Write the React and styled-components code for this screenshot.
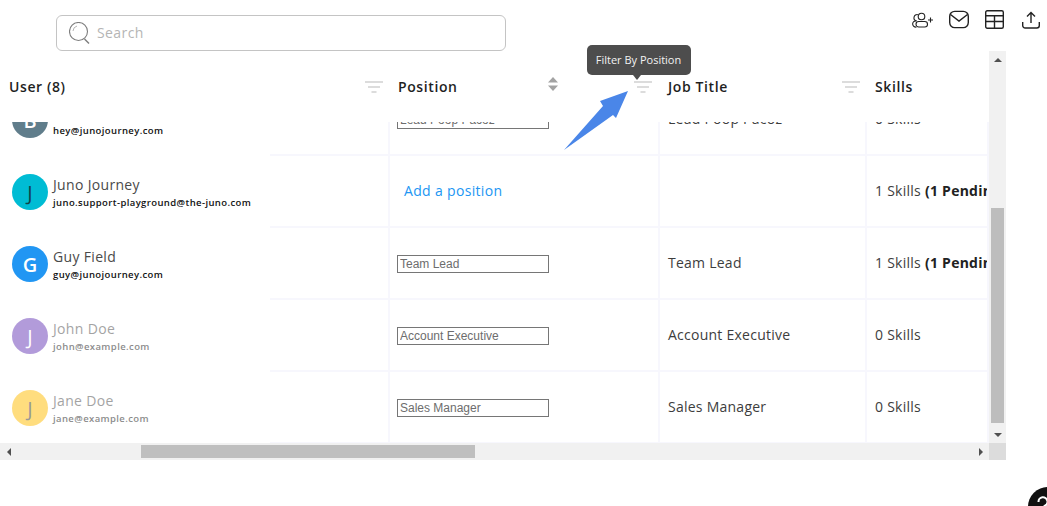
import React from 'react'
import styled, { createGlobalStyle } from 'styled-components'

const GlobalStyle = createGlobalStyle`
  html, body {
    margin: 0;
    height: 100%;
    overflow: hidden;
    background: #fff;
    font-family: "Open Sans", "Liberation Sans", sans-serif;
  }
  * { box-sizing: border-box; }
`

const Page = styled.div`
  position: relative;
  width: 1047px;
  height: 506px;
  overflow: hidden;
`
const TopBar = styled.div`
  display: flex;
  justify-content: space-between;
  height: 51px;
  padding: 10px 7px 0 56px;
`
const SearchBox = styled.label`
  display: flex;
  align-items: center;
  width: 450px;
  height: 36px;
  margin-top: 5px;
  padding-left: 12px;
  border: 1px solid #c4c4c4;
  border-radius: 6px;
`
const SearchInput = styled.input`
  flex: 1;
  min-width: 0;
  margin-left: 5px;
  margin-bottom: 1px;
  border: none;
  outline: none;
  font: 14px "Open Sans", sans-serif;
  letter-spacing: 0.4px;
  &::placeholder { color: #b5b5b5; opacity: 1; }
`
const Actions = styled.div`
  display: flex;
  align-items: flex-start;
  gap: 16px;
`
const TableFrame = styled.div`
  display: grid;
  grid-template-columns: 989px 17px;
  grid-template-rows: 392px 17px;
  width: 1006px;
`
const TableArea = styled.div`
  display: flex;
  flex-direction: column;
  min-width: 0;
  overflow: hidden;
`
const HeaderRow = styled.div`
  display: grid;
  grid-template-columns: 390px 270px 207px 1fr;
  flex: none;
  height: 71px;
`
const HeaderCell = styled.div`
  display: flex;
  align-items: center;
  justify-content: space-between;
  padding: 0 7px 0 ${p => p.$inset}px;
  font-size: 14px;
  font-weight: 600;
  letter-spacing: 0.6px;
  color: #1f1f1f;
`
const HeaderTools = styled.div`
  display: flex;
  align-items: center;
  gap: 76px;
  margin-right: 1px;
`
const SortMark = styled.svg`
  margin-bottom: 6px;
`
const Rows = styled.div`
  display: flex;
  flex: 1;
  flex-direction: column;
  justify-content: flex-end;
  min-height: 0;
  margin-bottom: -1px;
`
const RowsClip = styled.div`
  display: flex;
  flex: 1;
  flex-direction: column;
  min-height: 0;
  overflow: hidden;
`
const Row = styled.div`
  display: grid;
  grid-template-columns: 270px 120px 270px 207px 1fr;
  flex: none;
  height: 72px;
`
const UserCell = styled.div`
  display: flex;
  align-items: flex-start;
  gap: 5px;
  padding: 18px 0 0 12px;
  opacity: ${p => (p.$muted ? 0.5 : 1)};
`
const Avatar = styled.div`
  display: flex;
  align-items: center;
  justify-content: center;
  flex: none;
  width: 36px;
  height: 36px;
  border-radius: 50%;
  background: ${p => p.$color};
  color: ${p => p.$ink};
  font-size: 20px;
  font-weight: ${p => p.$weight};
`
const UserText = styled.div`
  display: flex;
  flex-direction: column;
`
const UserName = styled.div`
  font-size: 14px;
  line-height: 21px;
  letter-spacing: 0.33px;
  color: #4a4a4a;
`
const UserMail = styled.div`
  margin-top: 1px;
  font-size: 9.5px;
  line-height: 13px;
  font-weight: 600;
  letter-spacing: 0.39px;
  color: #111;
`
const Cell = styled.div`
  display: flex;
  align-items: center;
  min-width: 0;
  padding-left: ${p => p.$inset}px;
  padding-bottom: ${p => (p.$lift ? 2 : 0)}px;
  border-right: 2px solid #f7f7fd;
  border-bottom: 2px solid #f7f7fd;
  font-size: 14px;
  letter-spacing: 0.25px;
  color: #3d3d3d;
  white-space: nowrap;
  overflow: hidden;
`
const PositionInput = styled.input`
  width: 152px;
  height: 18px;
  margin: 2px 0 0;
  padding: 1px 2px;
  border: 1px solid #767676;
  border-radius: 0;
  outline: none;
  background: #fff;
  font: 12px "Liberation Sans", Arial, sans-serif;
  color: #6d6d6d;
`
const AddLink = styled.a`
  margin-bottom: 2px;
  padding-left: 7px;
  color: #2196f3;
  letter-spacing: 0.33px;
`
const Pending = styled.b`
  font-weight: 700;
  color: #222;
  margin-left: 4px;
`
const VScroll = styled.div`
  display: flex;
  flex-direction: column;
  align-items: center;
  background: #f1f1f1;
`
const VThumb = styled.div`
  width: 13px;
  height: 215px;
  margin-top: 140px;
  margin-bottom: 3px;
  background: #bdbdbd;
`
const HScroll = styled.div`
  display: flex;
  align-items: center;
  background: #f1f1f1;
`
const HThumb = styled.div`
  width: 334px;
  height: 13px;
  margin-left: 124px;
  margin-right: auto;
  background: #bfbfbf;
`
const ScrollCorner = styled.div`
  background: #dcdcdc;
`
const ArrowButton = styled.div`
  display: flex;
  align-items: center;
  justify-content: center;
  flex: none;
  width: 17px;
  height: 17px;
`
const Tooltip = styled.div`
  position: absolute;
  top: 45px;
  left: 587px;
  display: flex;
  align-items: center;
  justify-content: center;
  width: 104px;
  height: 30px;
  padding: 0 1px 1px 0;
  border-radius: 5px;
  background: #4d4d4d;
  color: #f2f2f2;
  font-size: 11px;
  font-weight: 500;
  &::after {
    content: '';
    position: absolute;
    top: 100%;
    left: 46px;
    border: 4px solid transparent;
    border-top: 5px solid #4d4d4d;
  }
`
const Pointer = styled.svg`
  position: absolute;
  top: 88px;
  left: 560px;
`
const HelpBadge = styled.div`
  position: absolute;
  left: 1028px;
  top: 487px;
  width: 40px;
  height: 40px;
  padding: 9px;
  border-radius: 50%;
  background: #111;
`

const FilterIcon = () => (
  <svg width="18" height="12" viewBox="0 0 18 12" fill="#dcdcdc">
    <rect x="0" y="0" width="18" height="2" />
    <rect x="3" y="5" width="12" height="2" />
    <rect x="6.5" y="10" width="5" height="2" />
  </svg>
)

const SortIcon = () => (
  <SortMark width="10" height="14" viewBox="0 0 10 14" fill="#a3a3a3">
    <path d="M5 0 L10 5.5 H0 Z" />
    <path d="M0 8.5 H10 L5 14 Z" />
  </SortMark>
)

const Tri = ({ dir }) => {
  const paths = {
    up: 'M4 2 L8 6 H0 Z',
    down: 'M0 2 H8 L4 6 Z',
    left: 'M6 0 V8 L2 4 Z',
    right: 'M2 0 V8 L6 4 Z',
  }
  return (
    <svg width="8" height="8" viewBox="0 0 8 8" fill="#505050">
      <path d={paths[dir]} />
    </svg>
  )
}

const SearchIcon = () => (
  <svg width="21" height="22" viewBox="0 0 21 22" fill="none" stroke="#7d7d7d">
    <circle cx="9.5" cy="9.5" r="9" strokeWidth="1.1" />
    <path d="M4 9 A5.5 5.5 0 0 1 8 4" stroke="#b5b5b5" />
    <path d="M15.5 17 L20 21.5" strokeWidth="1.4" />
  </svg>
)

const AddUsersIcon = () => (
  <svg width="21" height="19" viewBox="0 0 21 19" fill="none" stroke="#222" strokeWidth="1.1">
    <circle cx="9.5" cy="6.5" r="3.3" />
    <path d="M5.8 4.6 A3 3 0 0 0 4.5 10.8" />
    <rect x="4" y="11.5" width="11.5" height="5.5" rx="2.75" />
    <path d="M4.5 11 A3 3 0 0 0 0.7 14.3 A3 3 0 0 0 4.5 17" />
    <path d="M16 10 H21 M18.5 7.5 V12.5" />
  </svg>
)

const MailIcon = () => (
  <svg width="20" height="19" viewBox="0 0 20 19" fill="none" stroke="#222" strokeWidth="1.4">
    <rect x="0.7" y="1.4" width="18.6" height="16.2" rx="5" />
    <path d="M1.5 4.5 L10 11 L18.5 4.5" />
  </svg>
)

const TableIcon = () => (
  <svg width="19" height="19" viewBox="0 0 19 19" fill="none" stroke="#222" strokeWidth="1.4">
    <rect x="0.7" y="0.7" width="17.6" height="17.6" rx="1.5" />
    <path d="M0.7 5.8 H18.3 M0.7 11.5 H18.3 M9.5 5.8 V18.3" />
  </svg>
)

const UploadIcon = () => (
  <svg width="20" height="19" viewBox="-2 0 20 19" fill="none" stroke="#222" strokeWidth="1.4">
    <path d="M9 13 V2.5 M5 6.5 L9 2.5 L13 6.5" />
    <path d="M0.7 12 V15.5 A2.5 2.5 0 0 0 3.2 18 H14.8 A2.5 2.5 0 0 0 17.3 15.5 V12" />
  </svg>
)

const users = [
  { name: 'Ben Poole', mail: 'hey@junojourney.com', letter: 'B', color: '#607d8b', ink: '#fff', weight: 600, position: 'Lead Poop Pacoz', job: 'Lead Poop Pacoz', skills: '0 Skills' },
  { name: 'Juno Journey', mail: 'juno.support-playground@the-juno.com', letter: 'J', color: '#00bcd4', ink: '#12424a', weight: 400, job: '', skills: '1 Skills', pending: '(1 Pending)' },
  { name: 'Guy Field', mail: 'guy@junojourney.com', letter: 'G', color: '#2196f3', ink: '#fff', weight: 600, position: 'Team Lead', job: 'Team Lead', skills: '1 Skills', pending: '(1 Pending)' },
  { name: 'John Doe', mail: 'john@example.com', letter: 'J', color: '#673ab7', ink: '#fff', weight: 400, muted: true, position: 'Account Executive', job: 'Account Executive', skills: '0 Skills' },
  { name: 'Jane Doe', mail: 'jane@example.com', letter: 'J', color: '#ffbc00', ink: '#333', weight: 400, muted: true, position: 'Sales Manager', job: 'Sales Manager', skills: '0 Skills' },
]

const App = () => {
  return (
    <Page>
      <GlobalStyle />
      <TopBar>
        <SearchBox>
          <SearchIcon />
          <SearchInput placeholder="Search" />
        </SearchBox>
        <Actions>
          <AddUsersIcon />
          <MailIcon />
          <TableIcon />
          <UploadIcon />
        </Actions>
      </TopBar>

      <TableFrame>
        <TableArea>
          <HeaderRow>
            <HeaderCell $inset={9}>
              User (8)
              <FilterIcon />
            </HeaderCell>
            <HeaderCell $inset={8}>
              Position
              <HeaderTools>
                <SortIcon />
                <FilterIcon />
              </HeaderTools>
            </HeaderCell>
            <HeaderCell $inset={8}>
              Job Title
              <FilterIcon />
            </HeaderCell>
            <HeaderCell $inset={8}>Skills</HeaderCell>
          </HeaderRow>
          <RowsClip>
            <Rows>
              {users.map(u => (
                <Row key={u.mail}>
                  <UserCell $muted={u.muted}>
                    <Avatar $color={u.color} $ink={u.ink} $weight={u.weight}>{u.letter}</Avatar>
                    <UserText>
                      <UserName>{u.name}</UserName>
                      <UserMail>{u.mail}</UserMail>
                    </UserText>
                  </UserCell>
                  <Cell />
                  <Cell $inset={7}>
                    {u.position
                      ? <PositionInput readOnly value={u.position} />
                      : <AddLink>Add a position</AddLink>}
                  </Cell>
                  <Cell $inset={8} $lift>{u.job}</Cell>
                  <Cell $inset={8} $lift>
                    {u.skills}
                    {u.pending && <Pending>{u.pending}</Pending>}
                  </Cell>
                </Row>
              ))}
            </Rows>
          </RowsClip>
        </TableArea>
        <VScroll>
          <ArrowButton><Tri dir="up" /></ArrowButton>
          <VThumb />
          <ArrowButton><Tri dir="down" /></ArrowButton>
        </VScroll>
        <HScroll>
          <ArrowButton><Tri dir="left" /></ArrowButton>
          <HThumb />
          <ArrowButton><Tri dir="right" /></ArrowButton>
        </HScroll>
        <ScrollCorner />
      </TableFrame>

      <Tooltip>Filter By Position</Tooltip>
      <Pointer width="72" height="66" viewBox="560 88 72 66">
        <path d="M628 91 L600 101 L603 106 L564 150 L613 115 L616 118 Z" fill="#4a86e8" />
      </Pointer>
      <HelpBadge>
        <svg width="22" height="22" viewBox="0 0 22 22" fill="none" stroke="#fff" strokeWidth="2">
          <path d="M1.5 6 A4.5 4.5 0 1 1 7.5 10 V12" />
        </svg>
      </HelpBadge>
    </Page>
  )
}

export default App
